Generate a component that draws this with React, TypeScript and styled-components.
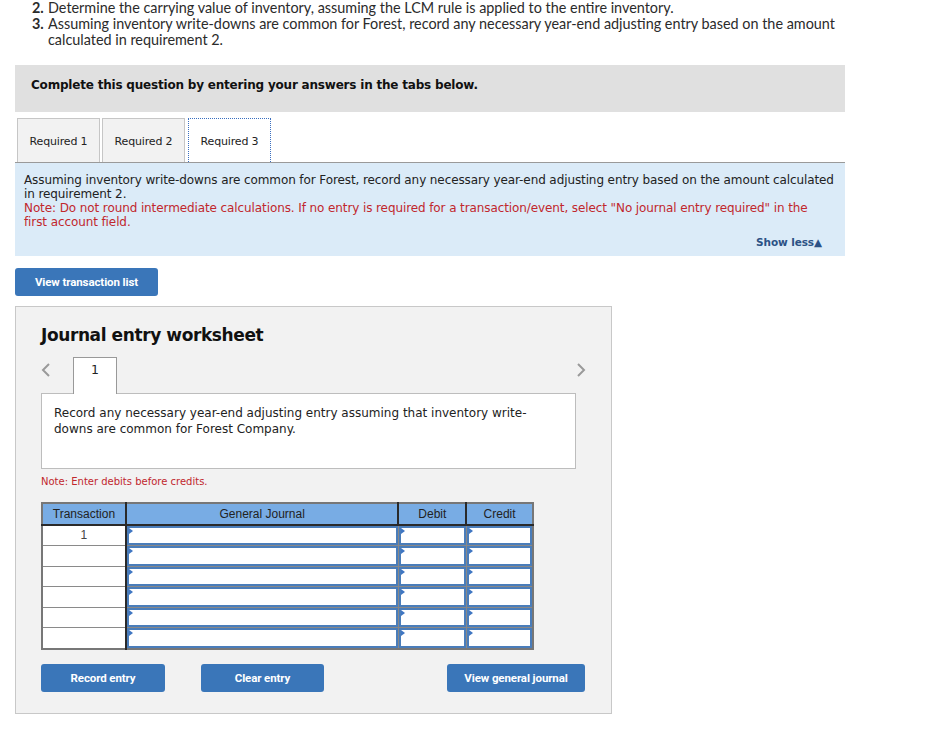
import React from "react";
import styled, { createGlobalStyle } from "styled-components";

const Global = createGlobalStyle`
  html, body { margin: 0; padding: 0; background: #fff; }
  body { font-family: "DejaVu Sans", Tahoma, sans-serif; color: #222; }
  * { box-sizing: border-box; }
`;

const Page = styled.div`
  width: 949px;
  padding: 0 0 0 15px;
`;

const ReqList = styled.div`
  padding-left: 17px;
  font-family: Lato, "Open Sans", sans-serif;
  font-size: 14.4px;
  line-height: 16px;
  color: #2b2b2b;
`;

const ReqItem = styled.div`
  display: grid;
  grid-template-columns: 16px 1fr;
  width: 816px;
`;

const ReqNum = styled.span`
  font-weight: 700;
`;

const Instruction = styled.div`
  margin-top: 17px;
  width: 830px;
  height: 47px;
  background: #e0e0e0;
  padding: 13px 0 0 16px;
  font-size: 12px;
  line-height: 14px;
  font-weight: 700;
  color: #111;
  letter-spacing: -0.2px;
`;

const TabBar = styled.div`
  margin-top: 6px;
  width: 830px;
  display: flex;
  padding-left: 2px;
  gap: 2px;
  border-bottom: 1px solid #9a9a9a;
`;

const Tab = styled.div<{ $active?: boolean }>`
  width: 83px;
  height: 44px;
  display: flex;
  align-items: center;
  justify-content: center;
  padding-top: 1px;
  font-size: 11px;
  letter-spacing: -0.15px;
  color: #222;
  background: ${(p) => (p.$active ? "#fff" : "#f2f2f2")};
  border: ${(p) => (p.$active ? "1px dotted #3a6fc0" : "1px solid #c6c6c6")};
  border-bottom: none;
  margin-bottom: ${(p) => (p.$active ? "-1px" : "0")};
  margin-left: ${(p) => (p.$active ? "1px" : "0")};
`;

const InfoPanel = styled.div`
  width: 830px;
  height: 93px;
  background: #dbebf8;
  padding: 10px 8px 0 9px;
  font-size: 12px;
  line-height: 14px;
  letter-spacing: -0.1px;
  color: #222;
  display: flex;
  flex-direction: column;
`;

const RedNote = styled.div`
  color: #c1272d;
  max-width: 800px;
`;

const ShowLess = styled.div`
  margin-top: auto;
  margin-bottom: 7px;
  margin-right: 15px;
  align-self: flex-end;
  font-size: 10.5px;
  font-weight: 700;
  color: #2c5185;
`;

const Button = styled.button<{ $w: number }>`
  width: ${(p) => p.$w}px;
  height: 28px;
  border: none;
  border-radius: 3px;
  background: #3a76b9;
  color: #fff;
  font-family: Roboto, "Liberation Sans", sans-serif;
  font-weight: 700;
  font-size: 11.5px;
  letter-spacing: -0.1px;
  padding: 0;
`;

const TopButton = styled(Button)`
  margin-top: 12px;
  display: block;
`;

const Worksheet = styled.div`
  margin-top: 10px;
  width: 597px;
  height: 408px;
  background: #f2f2f2;
  border: 1px solid #c8c8c8;
  padding: 17px 35px 21px 25px;
`;

const Title = styled.h2`
  margin: 0;
  font-size: 17px;
  line-height: 22px;
  font-weight: 700;
  color: #111;
  letter-spacing: -0.4px;
`;

const NavRow = styled.div`
  margin-top: 11px;
  width: 545px;
  display: flex;
  align-items: flex-end;
`;

const Chevron = styled.svg`
  width: 10px;
  height: 14px;
  margin-bottom: 16px;
`;

const EntryTab = styled.div`
  margin-left: 22px;
  width: 44px;
  height: 37px;
  background: #fff;
  border: 1px solid #999;
  border-bottom: none;
  margin-bottom: -1px;
  position: relative;
  z-index: 1;
  display: flex;
  justify-content: center;
  padding-top: 4px;
  font-size: 12.5px;
  color: #222;
`;

const Spacer = styled.div`
  flex: 1;
`;

const DescBox = styled.div`
  width: 535px;
  height: 76px;
  background: #fff;
  border: 1px solid #bdbdbd;
  padding: 11px 40px 11px 12px;
  font-size: 12px;
  line-height: 16px;
  color: #222;
`;

const Note = styled.div`
  margin-top: 7px;
  font-size: 10px;
  color: #c1272d;
`;

const Table = styled.table`
  margin-top: 15px;
  border-collapse: collapse;
  width: 493px;
  font-family: "Liberation Sans", Arial, sans-serif;
  border: 2px solid #777;
`;

const Th = styled.th<{ $w: number }>`
  width: ${(p) => p.$w}px;
  height: 22px;
  background: #78ace4;
  font-weight: 400;
  font-size: 12px;
  color: #222;
  text-align: center;
  border-right: 2px solid #2a2a2a;
  border-bottom: 2px solid #2a2a2a;
  padding: 0;
  &:last-child { border-right: none; }
`;

const TxCell = styled.td`
  height: 20.6px;
  background: #fff;
  border: 1px solid #8a8a8a;
  border-right: 2px solid #2a2a2a;
  text-align: center;
  vertical-align: top;
  font-size: 12px;
  color: #444;
  padding: 2px 0 0;
`;

const InCell = styled.td`
  height: 20.6px;
  padding: 0;
  border: 1px solid #888;
  background: #fff;
  position: relative;
  box-shadow: inset 0 0 0 2px #4a7dba;
  &::before {
    content: "";
    position: absolute;
    left: 2px;
    top: 2px;
    border-left: 4px solid #3f76c2;
    border-top: 3px solid transparent;
    border-bottom: 3px solid transparent;
  }
`;

const ButtonRow = styled.div`
  margin-top: 14px;
  width: 544px;
  display: flex;
  gap: 36px;
`;

const PushRight = styled.div`
  margin-left: auto;
`;

const Left = () => (
  <Chevron viewBox="0 0 10 14">
    <path d="M8 1 L2 7 L8 13" fill="none" stroke="#9a9a9a" strokeWidth="2" />
  </Chevron>
);
const Right = () => (
  <Chevron viewBox="0 0 10 14">
    <path d="M2 1 L8 7 L2 13" fill="none" stroke="#9a9a9a" strokeWidth="2" />
  </Chevron>
);

export default function App() {
  const rows = [1, 2, 3, 4, 5, 6];
  return (
    <Page>
      <Global />
      <ReqList>
        <ReqItem>
          <ReqNum>2.</ReqNum>
          <span>Determine the carrying value of inventory, assuming the LCM rule is applied to the entire inventory.</span>
        </ReqItem>
        <ReqItem>
          <ReqNum>3.</ReqNum>
          <span>
            Assuming inventory write-downs are common for Forest, record any necessary year-end adjusting entry based on the amount calculated in requirement 2.
          </span>
        </ReqItem>
      </ReqList>
      <Instruction>Complete this question by entering your answers in the tabs below.</Instruction>
      <TabBar>
        <Tab>Required 1</Tab>
        <Tab>Required 2</Tab>
        <Tab $active>Required 3</Tab>
      </TabBar>
      <InfoPanel>
        <div>
          Assuming inventory write-downs are common for Forest, record any necessary year-end adjusting entry based on the amount calculated in requirement 2.
        </div>
        <RedNote>
          Note: Do not round intermediate calculations. If no entry is required for a transaction/event, select "No journal entry required" in the first account field.
        </RedNote>
        <ShowLess>Show less▲</ShowLess>
      </InfoPanel>
      <TopButton $w={143}>View transaction list</TopButton>
      <Worksheet>
        <Title>Journal entry worksheet</Title>
        <NavRow>
          <Left />
          <EntryTab>1</EntryTab>
          <Spacer />
          <Right />
        </NavRow>
        <DescBox>
          Record any necessary year-end adjusting entry assuming that inventory write-downs are common for Forest Company.
        </DescBox>
        <Note>Note: Enter debits before credits.</Note>
        <Table>
          <thead>
            <tr>
              <Th $w={84}>Transaction</Th>
              <Th $w={274}>General Journal</Th>
              <Th $w={68}>Debit</Th>
              <Th $w={67}>Credit</Th>
            </tr>
          </thead>
          <tbody>
            {rows.map((r) => (
              <tr key={r}>
                <TxCell>{r === 1 ? "1" : ""}</TxCell>
                <InCell />
                <InCell />
                <InCell />
              </tr>
            ))}
          </tbody>
        </Table>
        <ButtonRow>
          <Button $w={124}>Record entry</Button>
          <Button $w={123}>Clear entry</Button>
          <PushRight>
            <Button $w={138}>View general journal</Button>
          </PushRight>
        </ButtonRow>
      </Worksheet>
    </Page>
  );
}
